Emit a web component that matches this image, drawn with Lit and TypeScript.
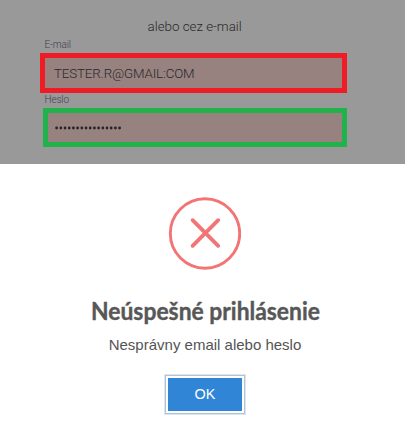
import { LitElement, html, css } from "lit";
import { customElement } from "lit/decorators.js";

@customElement("app-root")
export class AppRoot extends LitElement {
  static styles = css`
    :host {
      display: flex;
      flex-direction: column;
      width: 405px;
      height: 423px;
      overflow: hidden;
      background: #fff;
    }
    .backdrop {
      box-sizing: border-box;
      height: 164px;
      padding: 18px 58px 0 40px;
      background: #999;
      color: #29292b;
      font-family: Roboto, sans-serif;
      font-weight: 300;
    }
    .hint {
      height: 20px;
      padding-left: 107.5px;
      font-size: 13.33px;
      line-height: 18px;
      white-space: nowrap;
    }
    .label {
      height: 15px;
      padding-left: 4.5px;
      font-size: 10px;
      letter-spacing: -0.15px;
      line-height: 14px;
      color: #3c4250;
    }
    .field {
      box-sizing: border-box;
      display: flex;
      align-items: center;
      height: 40px;
      border: 5px solid #ef1c25;
      padding-left: 9px;
      background: #978280;
      font-size: 13.33px;
      letter-spacing: -0.14px;
      white-space: nowrap;
    }
    .field.ok {
      height: 39px;
      margin-left: 3px;
      border-color: #22b24c;
      padding-left: 7px;
    }
    .dots {
      display: block;
    }
    .dialog {
      display: flex;
      flex-direction: column;
      align-items: center;
      padding: 33px 0 0 5px;
      font-family: "Liberation Sans", sans-serif;
    }
    .icon {
      display: block;
      margin-right: 2px;
    }
    h2 {
      margin: 23px 0 0;
      height: 36px;
      font: 700 24.8px/36px Lato, sans-serif;
      color: #575757;
      white-space: nowrap;
    }
    .title {
      display: block;
      overflow: visible;
    }
    p {
      margin: 5px 0 0;
      height: 22px;
      font-size: 15px;
      line-height: 22px;
      color: #545454;
      white-space: nowrap;
    }
    button {
      width: 74px;
      height: 33px;
      margin: 22px 0 0;
      padding: 0;
      border: 0;
      background: #3085d6;
      color: #fff;
      font: 14.4px/33px "Liberation Sans", sans-serif;
      box-shadow: 0 0 0 2px #fff, 0 0 0 3px #b1c4d7, 0 0 0 4px #dce6ee;
    }
  `;

  render() {
    return html`
      <div class="backdrop">
        <div class="hint">alebo cez e-mail</div>
        <div class="label">E-mail</div>
        <div class="field">TESTER.R@GMAIL:COM</div>
        <div class="label">Heslo</div>
        <div class="field ok">
          <svg class="dots" width="68" height="4" fill="#252526">
            ${Array.from({ length: 16 }, (_, i) => i).map(
              (i) => html`<svg x=${i * 4.2} width="4" height="4"><circle cx="1.6" cy="2" r="1.4" /></svg>`
            )}
          </svg>
        </div>
      </div>
      <div class="dialog">
        <svg class="icon" width="74" height="73" viewBox="0 0 74 73" fill="none" stroke="#f27474">
          <circle cx="38" cy="36.5" r="34.7" stroke-width="2.9" />
          <path d="M25.6 23.2 51.2 48.8M51.2 23.2 25.6 48.8" stroke-width="3.8" stroke-linecap="round" />
        </svg>
        <h2>
          <svg class="title" width="229" height="36" fill="#575757" stroke="#575757" stroke-width="0.4" stroke-linejoin="round">
            <text x="0" y="27" textLength="229" lengthAdjust="spacingAndGlyphs">Neúspešné prihlásenie</text>
          </svg>
        </h2>
        <p>Nesprávny email alebo heslo</p>
        <button>OK</button>
      </div>
    `;
  }
}
